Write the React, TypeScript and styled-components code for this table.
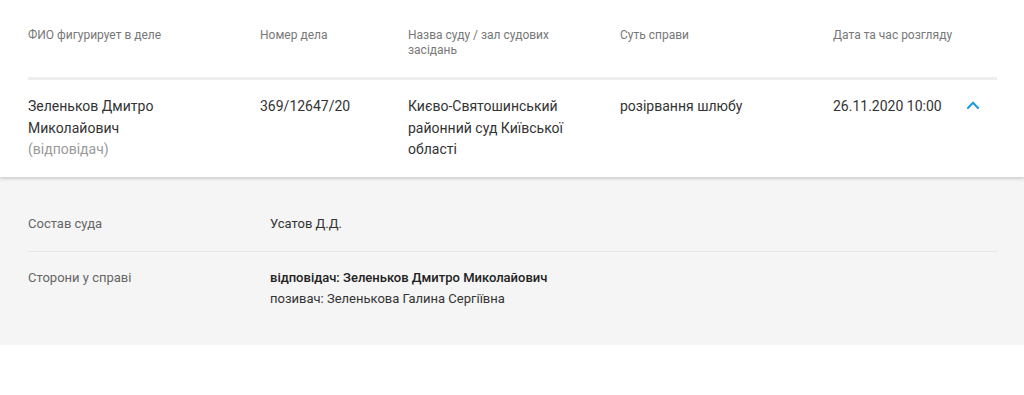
import styled, { createGlobalStyle } from 'styled-components'

const GlobalStyle = createGlobalStyle`
  body {
    margin: 0;
    background: #fff;
    font-family: Roboto, 'Liberation Sans', Arial, sans-serif;
  }
`

const COLUMNS = '232px 148px 212px 213px 134px 30px'

const Wrapper = styled.div`
  width: 1024px;
`

const CaseCard = styled.div`
  position: relative;
  z-index: 1;
  background: #fff;
  padding: 0 27px 0 28px;
  box-shadow: 0 2px 3px rgba(0, 0, 0, 0.16);
`

const HeadRow = styled.div`
  display: grid;
  grid-template-columns: ${COLUMNS};
  padding: 28px 0 19px;
  border-bottom: 3px solid #eeeeee;
`

const HeadCell = styled.div<{ $wide?: boolean }>`
  font-size: 12px;
  line-height: 15px;
  color: #777;
  padding-right: ${(p) => (p.$wide ? 0 : 24)}px;
  grid-column: ${(p) => (p.$wide ? 'span 2' : 'auto')};
`

const BodyRow = styled.div`
  display: grid;
  grid-template-columns: ${COLUMNS};
  padding: 16px 0 16px;
`

const Cell = styled.div<{ $pad?: number }>`
  font-size: 14px;
  line-height: 21.5px;
  color: #333;
  padding-right: ${(p) => p.$pad ?? 24}px;
`

const Role = styled.div`
  color: #9a9a9a;
`

const Toggle = styled.button`
  display: flex;
  align-items: flex-start;
  justify-content: flex-start;
  padding: 5px 0 0;
  border: 0;
  background: none;
  cursor: pointer;
`

const Details = styled.div`
  background: #f5f5f5;
  padding: 0 27px 0 28px;
`

const DetailRow = styled.div<{ $top: number; $bottom: number; $divider?: boolean }>`
  display: grid;
  grid-template-columns: 242px 1fr;
  padding: ${(p) => p.$top}px 0 ${(p) => p.$bottom}px;
  border-bottom: ${(p) => (p.$divider ? '1px solid #e6e6e6' : 'none')};
  font-size: 13px;
  line-height: 21px;
`

const DetailLabel = styled.div`
  color: #666;
`

const DetailValue = styled.div`
  color: #333;
`

const Strong = styled.div`
  font-weight: 500;
  color: #222;
`

function ChevronUp() {
  return (
    <svg width="12" height="8" viewBox="0 0 12 8">
      <polyline
        points="1,7 6,1.8 11,7"
        fill="none"
        stroke="#1b9ae4"
        strokeWidth="2"
        strokeLinecap="square"
      />
    </svg>
  )
}

export default function App() {
  return (
    <Wrapper>
      <GlobalStyle />
      <CaseCard>
        <HeadRow>
          <HeadCell>ФИО фигурирует в деле</HeadCell>
          <HeadCell>Номер дела</HeadCell>
          <HeadCell>Назва суду / зал судових засідань</HeadCell>
          <HeadCell>Суть справи</HeadCell>
          <HeadCell $wide>Дата та час розгляду</HeadCell>
        </HeadRow>
        <BodyRow>
          <Cell $pad={30}>
            Зеленьков Дмитро Миколайович
            <Role>(відповідач)</Role>
          </Cell>
          <Cell>369/12647/20</Cell>
          <Cell $pad={40}>Києво-Святошинський районний суд Київської області</Cell>
          <Cell>розірвання шлюбу</Cell>
          <Cell $pad={0}>26.11.2020 10:00</Cell>
          <Toggle aria-label="Згорнути">
            <ChevronUp />
          </Toggle>
        </BodyRow>
      </CaseCard>
      <Details>
        <DetailRow $top={36} $bottom={17} $divider>
          <DetailLabel>Состав суда</DetailLabel>
          <DetailValue>Усатов Д.Д.</DetailValue>
        </DetailRow>
        <DetailRow $top={15} $bottom={36}>
          <DetailLabel>Сторони у справі</DetailLabel>
          <DetailValue>
            <Strong>відповідач: Зеленьков Дмитро Миколайович</Strong>
            позивач: Зеленькова Галина Сергіївна
          </DetailValue>
        </DetailRow>
      </Details>
    </Wrapper>
  )
}
